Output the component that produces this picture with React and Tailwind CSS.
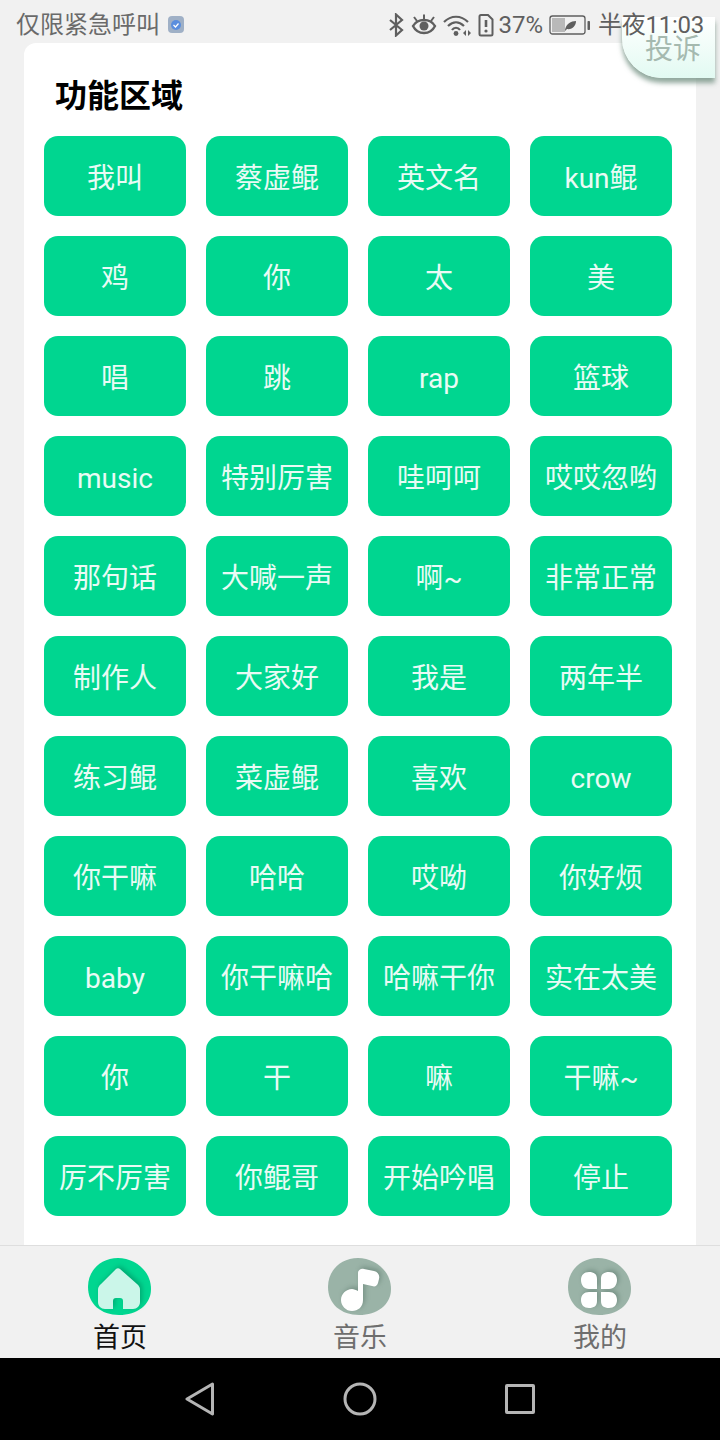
import React from 'react';

const buttons = [
    '我叫', '蔡虚鲲', '英文名', 'kun鲲',
    '鸡', '你', '太', '美',
    '唱', '跳', 'rap', '篮球',
    'music', '特别厉害', '哇呵呵', '哎哎忽哟',
    '那句话', '大喊一声', '啊~', '非常正常',
    '制作人', '大家好', '我是', '两年半',
    '练习鲲', '菜虚鲲', '喜欢', 'crow',
    '你干嘛', '哈哈', '哎呦', '你好烦',
    'baby', '你干嘛哈', '哈嘛干你', '实在太美',
    '你', '干', '嘛', '干嘛~',
    '厉不厉害', '你鲲哥', '开始吟唱', '停止',
];

const BLOB = 'M30 0C47 0 63 13 63 31C63 47 49 57 31 57C13 57 0 46 0 29C0 12 13 0 30 0Z';

const Soft = ({ id }) => (
    <filter id={id} x="-30%" y="-30%" width="160%" height="160%">
        <feGaussianBlur stdDeviation="2.500" />
    </filter>
);

const HOUSE = 'M28 11C29 10 31 10 32 11L49 26C51 28 52 29 52 32L52 44C52 48 49 51 45 51L35 51L35 43C35 41 34 40 32 40L28 40C26 40 25 41 25 43L25 51L17 51C13 51 10 48 10 44L10 32C10 29 11 28 13 26Z';
const NOTE = 'M30 15C30 12 33 10 36 11L46 13C50 14 52 17 51 21L50 25C49 28 47 29 44 28L35 26L35 42C35 49 30 53 24 53C18 53 13 48 13 42C13 36 18 31 24 31C26 31 28 32 30 33Z';
const PETALS = 'M29 31L29 21C29 16 26 14 21 14C16 14 13 17 13 22C13 27 16 31 21 31Z M33 31L33 21C33 16 36 14 41 14C46 14 49 17 49 22C49 27 46 31 41 31Z M29 34L29 43C29 48 26 50 21 50C16 50 13 47 13 42C13 37 16 34 21 34Z M33 34L33 43C33 48 36 50 41 50C46 50 49 47 49 42C49 37 46 34 41 34Z';

const HomeIcon = () => (
    <svg width="63" height="57" viewBox="0 0 63 57">
        <defs><Soft id="homeSoft" /></defs>
        <path d={BLOB} fill="#00d690" />
        <path d={HOUSE} fill="#00855a" opacity="0.55" transform="translate(2 -2)" filter="url(#homeSoft)" />
        <path d={HOUSE} fill="#cbf6e9" />
    </svg>
);

const MusicIcon = () => (
    <svg width="63" height="57" viewBox="0 0 63 57">
        <defs><Soft id="musicSoft" /></defs>
        <path d={BLOB} fill="#9ab3a7" />
        <path d={NOTE} fill="#5f7a6e" opacity="0.6" transform="translate(2 -2)" filter="url(#musicSoft)" />
        <path d={NOTE} fill="#ffffff" />
    </svg>
);

const CloverIcon = () => (
    <svg width="63" height="57" viewBox="0 0 63 57">
        <defs><Soft id="cloverSoft" /></defs>
        <path d={BLOB} fill="#9ab3a7" />
        <path d={PETALS} fill="#5f7a6e" opacity="0.6" transform="translate(2 -2)" filter="url(#cloverSoft)" />
        <path d={PETALS} fill="#ffffff" />
    </svg>
);

const StatusIcons = () => (
    <div className="flex items-center text-[#5f5f5f]">
        {/* bluetooth */}
        <svg width="16" height="24" viewBox="0 0 16 24" fill="none" stroke="#5f5f5f" strokeWidth="2.2" className="mr-[7px]">
            <path d="M2 7L14 17L8 22.5V1.5L14 7L2 17" />
        </svg>
        {/* eye */}
        <svg width="26" height="24" viewBox="0 0 26 24" fill="none" stroke="#5f5f5f" strokeWidth="2.4" className="mr-[6px]">
            <path d="M2 13C5 8 9 7 13 7C17 7 21 8 24 13C21 19 17 20 13 20C9 20 5 19 2 13Z" />
            <circle cx="13" cy="13" r="4.5" fill="#5f5f5f" stroke="none" />
            <path d="M3 4L6 8M13 1.5V6M23 4L20 8" strokeWidth="2" />
        </svg>
        {/* wifi */}
        <svg width="28" height="24" viewBox="0 0 28 24" fill="none" stroke="#5f5f5f" strokeWidth="2.2" className="mr-[6px]">
            <path d="M1 9C8 2 18 2 25 9" />
            <path d="M5 13C10 8 16 8 21 13" />
            <path d="M9 17C11 14 15 14 17 17" />
            <circle cx="13" cy="20.5" r="2.4" fill="#5f5f5f" stroke="none" />
            <path d="M20 20L23 17V23ZM25 17L28 20L25 23Z" fill="#5f5f5f" stroke="none" />
        </svg>
        {/* sim warning */}
        <svg width="17" height="24" viewBox="0 0 17 24" fill="none" stroke="#5f5f5f" strokeWidth="2" className="mr-[4px]">
            <path d="M2.5 3.5C2.5 2.5 3 2 4 2H11L15.5 6.5V21C15.5 22 15 22.500 14 22.500H4C3 22.500 2.500 22 2.500 21Z" />
            <path d="M9 7V14" strokeWidth="2.6" />
            <circle cx="9" cy="18" r="1.6" fill="#5f5f5f" stroke="none" />
        </svg>
        <span className="text-[24px] leading-none mr-[6px]">37%</span>
        {/* battery */}
        <svg width="41" height="24" viewBox="0 0 41 24" fill="none" className="mr-[8px]">
            <rect x="1" y="3" width="35" height="18" rx="2.500" fill="#f1f1f1" stroke="#5f5f5f" strokeWidth="1.300" />
            <rect x="3" y="5" width="13" height="14" fill="#b9b9b9" />
            <path d="M16 17C17 11 22 8 27 8C27 13 23 17 18 16L16 18Z" fill="#5f5f5f" />
            <rect x="38.500" y="8" width="2.500" height="9" rx="0.800" fill="#5f5f5f" />
        </svg>
        <span className="text-[24px] leading-none tracking-[-0.25px]">半夜11:03</span>
    </div>
);

const TabItem = ({ icon, label, active }) => (
    <div className="flex flex-col items-center">
        <div className="mr-[1px] h-[57px]">{icon}</div>
        <span className={`text-[27px] leading-[36px] mt-[5px] ${active ? 'text-[#111111]' : 'text-[#6e6e6e]'}`}>{label}</span>
    </div>
);

const App = () => {
    return (
        <div className="relative w-[720px] h-[1440px] overflow-hidden flex flex-col bg-[#f1f1f1] font-['Roboto','Noto_Sans_CJK_SC',sans-serif]">

            {/* Status bar */}
            <div className="relative z-20 h-[43px] shrink-0 flex items-center justify-between pl-[16px] pr-[16px] pt-[6px]">
                <div className="flex items-center gap-[8px]">
                    <span className="text-[24px] leading-none text-[#6a6a6a]">仅限紧急呼叫</span>
                    <div className="w-[16px] h-[17px] rounded-[4px] bg-[#9fb0c6] flex items-center justify-center">
                        <svg width="10" height="10" viewBox="0 0 10 10">
                            <circle cx="5" cy="5" r="5" fill="#5a8ede" />
                            <path d="M2.500 5L4.500 7L7.500 3.500" fill="none" stroke="#ffffff" strokeWidth="1.200" />
                        </svg>
                    </div>
                </div>
                <StatusIcons />
            </div>

            {/* Complaint tab floats over the card */}
            <div className="absolute z-10 top-[17px] left-[622px] w-[93px] h-[61px] rounded-bl-[40px] bg-gradient-to-b from-white to-[#e2faf2] shadow-[0_5px_5px_rgba(110,140,125,0.75)] flex items-end pl-[23px] pb-[12px]">
                <span className="text-[28px] leading-[32px] text-[#a5b9af]">投诉</span>
            </div>

            {/* Card */}
            <main className="flex-1 min-h-0 px-[24px]">
                <div className="h-full bg-white rounded-t-[12px] pl-[20px] pr-[24px]">
                    <h2 className="pl-[11px] pt-[34px] h-[93px] text-[32px] leading-[38px] font-bold text-black">功能区域</h2>
                    <div className="grid grid-cols-4 gap-x-[20px] gap-y-[20px]">
                        {buttons.map((text, i) => (
                            <div key={i} className="h-[80px] pt-[5px] rounded-[14px] bg-[#00d690] flex items-center justify-center text-[28px] text-[#e9fbf5]">
                                {text}
                            </div>
                        ))}
                    </div>
                </div>
            </main>

            {/* Tab bar */}
            <nav className="h-[113px] shrink-0 border-t border-[#dedede] bg-[#f1f1f1] grid grid-cols-3 pt-[12px]">
                <TabItem icon={<HomeIcon />} label="首页" active />
                <TabItem icon={<MusicIcon />} label="音乐" />
                <TabItem icon={<CloverIcon />} label="我的" />
            </nav>

            {/* Android nav */}
            <div className="h-[82px] shrink-0 bg-black flex items-center justify-between pl-[185px] pr-[185px]">
                <svg width="30" height="34" viewBox="0 0 30 34" fill="none" stroke="#b5b5b5" strokeWidth="3" strokeLinejoin="round">
                    <path d="M27.500 2L2 17L27.500 32Z" />
                </svg>
                <svg width="34" height="34" viewBox="0 0 34 34" fill="none" stroke="#b5b5b5" strokeWidth="3">
                    <circle cx="17" cy="17" r="15" />
                </svg>
                <div className="w-[30px] h-[30px] border-[3px] border-[#b5b5b5] rounded-[2px]"></div>
            </div>
        </div>
    );
};

export default App;
